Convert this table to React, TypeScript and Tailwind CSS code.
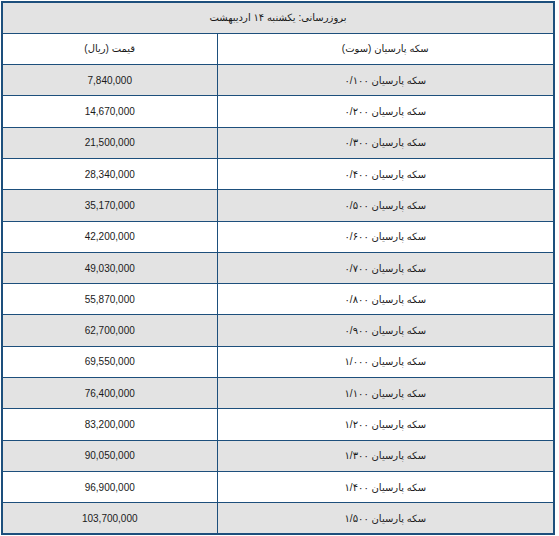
import React from "react";

const sizes = [
  "۰/۱۰۰", "۰/۲۰۰", "۰/۳۰۰", "۰/۴۰۰", "۰/۵۰۰", "۰/۶۰۰", "۰/۷۰۰", "۰/۸۰۰",
  "۰/۹۰۰", "۱/۰۰۰", "۱/۱۰۰", "۱/۲۰۰", "۱/۳۰۰", "۱/۴۰۰", "۱/۵۰۰",
];

const prices = [
  "7,840,000", "14,670,000", "21,500,000", "28,340,000", "35,170,000",
  "42,200,000", "49,030,000", "55,870,000", "62,700,000", "69,550,000",
  "76,400,000", "83,200,000", "90,050,000", "96,900,000", "103,700,000",
];

const cell = "border border-[#1d4f7c] h-[31.3px] p-0 text-center align-middle";

const App = () => {
  return (
    <div className="bg-white w-[559px] h-[536px] pt-px pl-px">
      <table
        dir="rtl"
        className="border-collapse border-2 border-[#1d4f7c] w-[554px] text-[10px] text-[#1a1a1a] font-['Liberation_Sans','DejaVu_Sans',sans-serif]"
      >
        <tbody>
          {/* Title */}
          <tr className="bg-[#e3e3e3]">
            <td colSpan={2} className={cell}>
              بروزرسانی: یکشنبه ۱۴ اردیبهشت
            </td>
          </tr>

          {/* Column headers */}
          <tr className="bg-white">
            <td className={`${cell} w-[337px]`}>سکه پارسیان (سوت)</td>
            <td className={cell}>قیمت (ریال)</td>
          </tr>

          {sizes.map((s, i) => (
            <tr key={s} className={i % 2 === 0 ? "bg-[#e3e3e3]" : "bg-white"}>
              <td className={cell}>سکه پارسیان {s}</td>
              <td className={cell}>{prices[i]}</td>
            </tr>
          ))}
        </tbody>
      </table>
    </div>
  );
};

export default App;
